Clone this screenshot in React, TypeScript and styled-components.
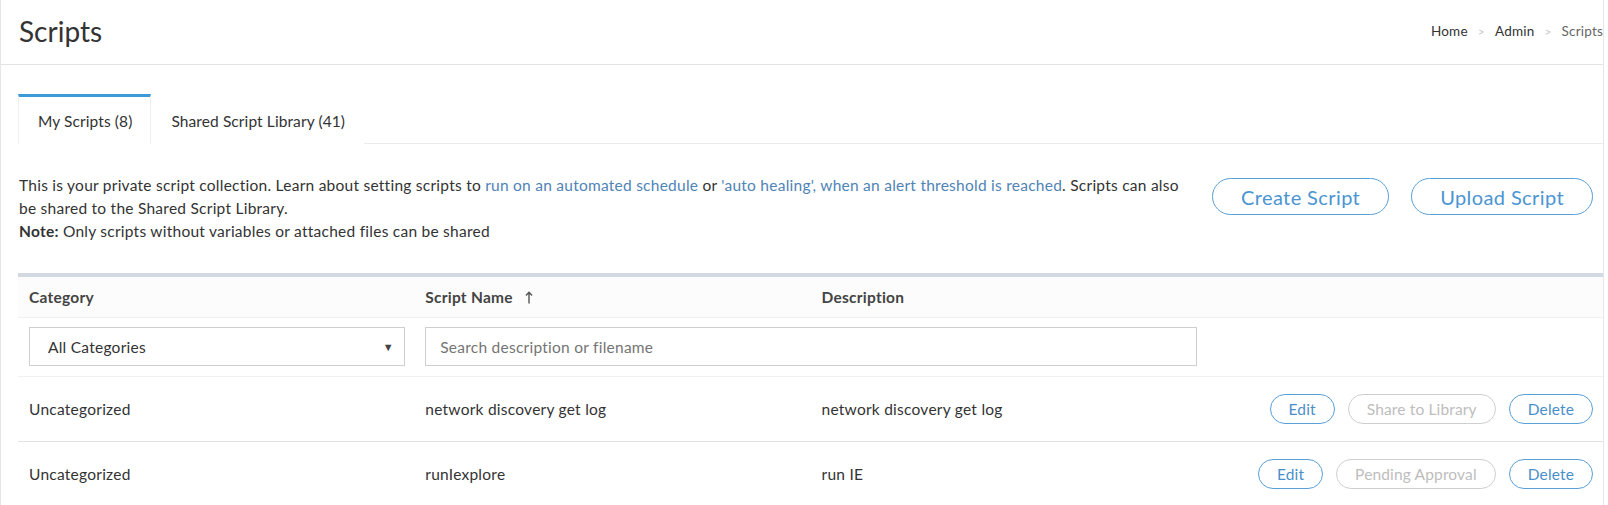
import styled, { createGlobalStyle } from "styled-components";

const GlobalStyle = createGlobalStyle`
  html, body {
    margin: 0;
    padding: 0;
    background: #fff;
  }
  body {
    font-family: Lato, "Noto Sans", "Liberation Sans", sans-serif;
    color: #333;
    font-size: 15.5px;
    letter-spacing: 0.25px;
  }
  * {
    box-sizing: border-box;
  }
`;

const Page = styled.div`
  width: 1604px;
  min-height: 505px;
  border-left: 1px solid #e6e6e6;
  border-right: 1px solid #e6e6e6;
`;

const Header = styled.header`
  display: flex;
  align-items: center;
  justify-content: space-between;
  height: 65px;
  padding: 0 0 2px 18px;
  border-bottom: 1px solid #e3e3e3;
`;

const Title = styled.h1`
  margin: 0;
  font-size: 28px;
  font-weight: 400;
  letter-spacing: 0;
  color: #333;
`;

const Breadcrumb = styled.nav`
  display: flex;
  align-items: center;
  gap: 10px;
  font-size: 13.5px;
  letter-spacing: 0.2px;
  color: #333;
`;

const Crumb = styled.span<{ $current?: boolean }>`
  color: ${(p) => (p.$current ? "#666" : "#333")};
`;

const CrumbSep = styled.span`
  color: #c8c8c8;
  font-size: 12px;
`;

const Body = styled.main`
  padding: 29px 0 0 17px;
`;

const Tabs = styled.div`
  display: flex;
  border-bottom: 1px solid #ececec;
  width: 1585px;
`;

const Tab = styled.div<{ $active?: boolean }>`
  display: flex;
  align-items: center;
  height: 50px;
  padding: 0 18px 0 19px;
  color: #333;
  letter-spacing: 0.1px;
  margin-bottom: -1px;
  border-top: 3px solid ${(p) => (p.$active ? "#3d9ad8" : "transparent")};
  border-left: 1px solid ${(p) => (p.$active ? "#efefef" : "transparent")};
  border-right: 1px solid ${(p) => (p.$active ? "#efefef" : "transparent")};
  background: #fff;
`;

const Intro = styled.section`
  display: flex;
  justify-content: space-between;
  align-items: flex-start;
  padding: 30px 10px 0 1px;
  width: 1585px;
`;

const IntroText = styled.p`
  margin: 0;
  width: 1166px;
  line-height: 23px;
  color: #333;
`;

const TextLink = styled.a`
  color: #4f84b6;
  text-decoration: none;
`;

const IntroActions = styled.div`
  display: flex;
  gap: 22px;
  padding-top: 4px;
`;

const BigButton = styled.button`
  height: 37px;
  padding: 0 28px;
  border: 1px solid #5a9fd6;
  border-radius: 19px;
  background: #fff;
  color: #4a95d2;
  font-family: inherit;
  font-size: 20px;
  letter-spacing: 0.4px;
  cursor: pointer;
`;

const Table = styled.table`
  margin-top: 30px;
  width: 1585px;
  border-collapse: collapse;
  table-layout: fixed;
  border-top: 4px solid #d2d9e0;
`;

const HeadCell = styled.th`
  height: 42px;
  padding: 0 11px;
  text-align: left;
  font-weight: 700;
  color: #444;
  background: #fcfcfc;
  border-bottom: 1px solid #f1f1f1;
`;

const SortArrow = styled.svg`
  margin-left: 12px;
  vertical-align: -1px;
`;

const FilterCell = styled.td`
  height: 59px;
  padding: 0 11px;
  background: #fff;
  border-bottom: 1px solid #f1f1f1;
`;

const SelectBox = styled.div`
  position: relative;
  display: flex;
  align-items: center;
  height: 39px;
  width: 376px;
  padding-left: 18px;
  border: 1px solid #cfcfcf;
  color: #333;
`;

const Caret = styled.span`
  position: absolute;
  right: 10px;
  top: 12px;
  font-size: 11px;
  color: #444;
`;

const SearchInput = styled.input`
  width: 772px;
  height: 39px;
  padding: 0 14px;
  border: 1px solid #cfcfcf;
  font-family: inherit;
  font-size: 15.5px;
  letter-spacing: 0.25px;
  color: #333;
  outline: none;

  ::placeholder {
    color: #a8a8a8;
  }
`;

const Row = styled.tr<{ $last?: boolean }>`
  border-bottom: 1px solid ${(p) => (p.$last ? "transparent" : "#e2e2e2")};
`;

const Cell = styled.td<{ $actions?: boolean }>`
  height: 65px;
  padding: ${(p) => (p.$actions ? "0 10px 0 0" : "0 11px")};
  color: #333;
  text-align: ${(p) => (p.$actions ? "right" : "left")};
`;

const RowActions = styled.div`
  display: flex;
  justify-content: flex-end;
  gap: 13px;
`;

const PillButton = styled.button<{ $disabled?: boolean }>`
  height: 30px;
  padding: 0 18px;
  border-radius: 15px;
  background: #fff;
  font-family: inherit;
  font-size: 15.5px;
  letter-spacing: 0.15px;
  border: 1px solid ${(p) => (p.$disabled ? "#cfcfcf" : "#5a9fd6")};
  color: ${(p) => (p.$disabled ? "#bdbdbd" : "#4a8fca")};
  cursor: ${(p) => (p.$disabled ? "default" : "pointer")};
`;

type Script = {
  category: string;
  name: string;
  description: string;
  shareLabel: string;
};

const scripts: Script[] = [
  {
    category: "Uncategorized",
    name: "network discovery get log",
    description: "network discovery get log",
    shareLabel: "Share to Library",
  },
  {
    category: "Uncategorized",
    name: "runIexplore",
    description: "run IE",
    shareLabel: "Pending Approval",
  },
];

export default function App() {
  return (
    <>
      <GlobalStyle />
      <Page>
        <Header>
          <Title>Scripts</Title>
          <Breadcrumb>
            <Crumb>Home</Crumb>
            <CrumbSep>&gt;</CrumbSep>
            <Crumb>Admin</Crumb>
            <CrumbSep>&gt;</CrumbSep>
            <Crumb $current>Scripts</Crumb>
          </Breadcrumb>
        </Header>

        <Body>
          <Tabs>
            <Tab $active>My Scripts (8)</Tab>
            <Tab>Shared Script Library (41)</Tab>
          </Tabs>

          <Intro>
            <IntroText>
              This is your private script collection. Learn about setting scripts to{" "}
              <TextLink href="#">run on an automated schedule</TextLink> or{" "}
              <TextLink href="#">'auto healing', when an alert threshold is reached</TextLink>.
              Scripts can also be shared to the Shared Script Library.
              <br />
              <b>Note:</b> Only scripts without variables or attached files can be shared
            </IntroText>
            <IntroActions>
              <BigButton>Create Script</BigButton>
              <BigButton>Upload Script</BigButton>
            </IntroActions>
          </Intro>

          <Table>
            <thead>
              <tr>
                <HeadCell>Category</HeadCell>
                <HeadCell>
                  Script Name
                  <SortArrow width="8" height="13" viewBox="0 0 8 13">
                    <path d="M4 12.5V1.5M1 4.5L4 1.2L7 4.5" fill="none" stroke="#555" strokeWidth="1.4" />
                  </SortArrow>
                </HeadCell>
                <HeadCell>Description</HeadCell>
                <HeadCell />
              </tr>
            </thead>
            <tbody>
              <tr>
                <FilterCell>
                  <SelectBox>
                    All Categories
                    <Caret>▼</Caret>
                  </SelectBox>
                </FilterCell>
                <FilterCell colSpan={2}>
                  <SearchInput placeholder="Search description or filename" />
                </FilterCell>
                <FilterCell />
              </tr>
              {scripts.map((s, i) => (
                <Row key={s.name} $last={i === scripts.length - 1}>
                  <Cell>{s.category}</Cell>
                  <Cell>{s.name}</Cell>
                  <Cell>{s.description}</Cell>
                  <Cell $actions>
                    <RowActions>
                      <PillButton>Edit</PillButton>
                      <PillButton $disabled>{s.shareLabel}</PillButton>
                      <PillButton>Delete</PillButton>
                    </RowActions>
                  </Cell>
                </Row>
              ))}
            </tbody>
          </Table>
        </Body>
      </Page>
    </>
  );
}
